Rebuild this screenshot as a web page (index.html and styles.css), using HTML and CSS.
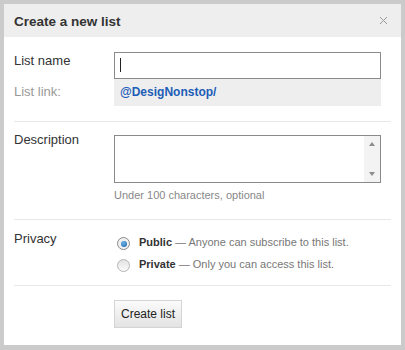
FILE: index.html
```html
<!DOCTYPE html>
<html lang="en">
<head>
    <meta charset="UTF-8">
    <meta name="viewport" content="width=device-width, initial-scale=1.0">
    <title>Create a new list</title>
    <link rel="stylesheet" href="styles.css">
</head>
<body>
    <div class="dialog">
        <div class="dialog-header">
            <h2>Create a new list</h2>
            <svg class="close" width="9" height="9" viewBox="0 0 9 9">
                <path d="M1 1 L8 8 M8 1 L1 8" stroke="#9a9a9a" stroke-width="1" fill="none"/>
            </svg>
        </div>

        <div class="dialog-body">
            <div class="section">
                <div class="row">
                    <label class="label">List name</label>
                    <div class="text-input"><span class="caret"></span></div>
                </div>
                <div class="row">
                    <span class="label muted">List link:</span>
                    <div class="link-box">@DesigNonstop/</div>
                </div>
            </div>

            <div class="section section-desc">
                <div class="row">
                    <label class="label label-desc">Description</label>
                    <div class="field">
                        <div class="textarea">
                            <div class="scrollbar">
                                <span class="arrow-up"></span>
                                <span class="arrow-down"></span>
                            </div>
                        </div>
                        <p class="hint">Under 100 characters, optional</p>
                    </div>
                </div>
            </div>

            <div class="section section-privacy">
                <div class="row">
                    <span class="label">Privacy</span>
                    <div class="options">
                        <div class="option">
                            <span class="radio checked"></span>
                            <span><b>Public</b> &mdash; Anyone can subscribe to this list.</span>
                        </div>
                        <div class="option">
                            <span class="radio"></span>
                            <span><b>Private</b> &mdash; Only you can access this list.</span>
                        </div>
                    </div>
                </div>
            </div>

            <div class="section section-actions">
                <div class="row">
                    <span class="label"></span>
                    <button class="btn">Create list</button>
                </div>
            </div>
        </div>
    </div>
</body>
</html>
```

FILE: styles.css
```css
body {
    font-family: "Liberation Sans", Arial, sans-serif;
    margin: 0;
    padding: 4px;
    height: 350px;
    box-sizing: border-box;
    background-color: #cbcbcb;
    color: #333;
}

.dialog {
    width: 397px;
    height: 341px;
    background-color: #fff;
}

.dialog-header {
    display: flex;
    justify-content: space-between;
    align-items: center;
    height: 33px;
    padding: 0 13px 0 10px;
    background-color: #eee;
}
.dialog-header h2 {
    margin: 0;
    font-size: 13.5px;
    font-weight: bold;
    color: #333;
    padding-top: 2px;
}

.dialog-body {
    padding: 0 10px;
}

.section {
    padding: 15px 0 15px;
    border-bottom: 1px solid #e8e8e8;
}

.row {
    display: flex;
}

.label {
    width: 100px;
    flex-shrink: 0;
    font-size: 13px;
    line-height: 16px;
    padding-top: 1px;
}
.muted {
    color: #999;
    padding-top: 5px;
}

.text-input {
    width: 267px;
    height: 27px;
    box-sizing: border-box;
    border: 1px solid #8a8a8a;
    padding: 5px 0 0 5px;
}
.caret {
    display: block;
    width: 1px;
    height: 14px;
    background-color: #222;
}

.link-box {
    width: 267px;
    height: 27px;
    box-sizing: border-box;
    background-color: #eee;
    padding-left: 6px;
    font-size: 12px;
    font-weight: bold;
    line-height: 27px;
    color: #1c5db7;
}

.section-desc {
    padding: 13px 0 18px;
}
.label-desc {
    padding-top: 0;
    margin-top: -3px;
}
.field {
    width: 267px;
}
.textarea {
    display: flex;
    justify-content: flex-end;
    height: 48px;
    box-sizing: border-box;
    border: 1px solid #8a8a8a;
}
.scrollbar {
    width: 16px;
    display: flex;
    flex-direction: column;
    justify-content: space-between;
    align-items: center;
    padding: 6px 0;
    background-color: #f3f3f3;
}
.arrow-up {
    width: 0;
    height: 0;
    border-left: 3px solid transparent;
    border-right: 3px solid transparent;
    border-bottom: 4px solid #8d8d8d;
}
.arrow-down {
    width: 0;
    height: 0;
    border-left: 3px solid transparent;
    border-right: 3px solid transparent;
    border-top: 4px solid #8d8d8d;
}
.hint {
    margin: 6px 0 0;
    font-size: 11px;
    line-height: 12px;
    color: #888;
}

.section-privacy {
    padding: 11px 0 10px;
}
.section-privacy .label {
    padding-top: 0;
}
.options {
    padding-left: 3px;
}
.option {
    display: flex;
    align-items: center;
    height: 22px;
    font-size: 11px;
    color: #777;
}
.option b {
    color: #333;
}
.radio {
    width: 13px;
    height: 13px;
    box-sizing: border-box;
    border-radius: 50%;
    border: 1px solid #b5b5b5;
    background: linear-gradient(#e2e2e2, #fafafa);
    margin: 3px 9px 0 0;
    position: relative;
}
.radio.checked {
    border-color: #8a8a8a;
    background: #f0f0f0;
}
.radio.checked::after {
    content: "";
    position: absolute;
    left: 2.5px;
    top: 2.5px;
    width: 6px;
    height: 6px;
    border-radius: 50%;
    background: radial-gradient(circle at 40% 35%, #6fb3e8, #1260a8);
}

.section-actions {
    padding: 14px 0 16px;
    border-bottom: none;
}
.btn {
    width: 68px;
    height: 28px;
    font-family: "Liberation Sans", Arial, sans-serif;
    font-size: 12px;
    color: #222;
    border: 1px solid #d4d4d4;
    background: linear-gradient(#fbfbfb, #e3e3e3);
    padding: 0;
}
```
